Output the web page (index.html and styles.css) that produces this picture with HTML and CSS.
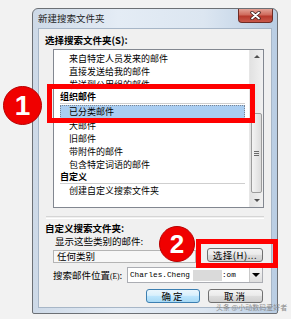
FILE: index.html
```html
<!DOCTYPE html>
<html lang="zh-CN">
<head>
  <meta charset="UTF-8">
  <title>新建搜索文件夹</title>
  <link rel="stylesheet" href="styles.css">
</head>
<body>
  <div class="stage">
    <div class="window">
      <div class="titlebar">
        <span class="title">新建搜索文件夹</span>
        <div class="close">
          <svg width="11" height="9" viewBox="0 0 11 9">
            <path d="M2 1.5 L9 7.5 M9 1.5 L2 7.5" stroke="#3b1d1a" stroke-width="3.4" stroke-linecap="round"/>
            <path d="M2 1.5 L9 7.5 M9 1.5 L2 7.5" stroke="#fff" stroke-width="1.8" stroke-linecap="round"/>
          </svg>
        </div>
      </div>

      <div class="content">
        <div class="label bold">选择搜索文件夹(S):</div>

        <div class="listbox">
          <div class="items">
            <div class="item">来自特定人员发来的邮件</div>
            <div class="item">直接发送给我的邮件</div>
            <div class="item">发送到公用组的邮件</div>
            <div class="group">组织邮件</div>
            <div class="item selected">已分类邮件</div>
            <div class="item">大邮件</div>
            <div class="item">旧邮件</div>
            <div class="item">带附件的邮件</div>
            <div class="item">包含特定词语的邮件</div>
            <div class="group">自定义</div>
            <div class="item">创建自定义搜索文件夹</div>
          </div>
          <div class="scrollbar">
            <div class="sb-btn"><span class="arrow-up"></span></div>
            <div class="sb-track">
              <div class="sb-thumb">
                <svg width="5" height="5" viewBox="0 0 5 5">
                  <path d="M0 0.5h5M0 2.5h5M0 4.5h5" stroke="#6b6b6b" stroke-width="1"/>
                </svg>
              </div>
            </div>
            <div class="sb-btn"><span class="arrow-down"></span></div>
          </div>
        </div>

        <div class="separator"></div>

        <div class="label bold custom-title">自定义搜索文件夹:</div>
        <div class="label sub">显示这些类别的邮件:</div>

        <div class="row">
          <div class="field">任何类别</div>
          <button class="btn pick">选择(H)...</button>
        </div>

        <div class="row location">
          <span class="loc-label">搜索邮件位置<small>(E)</small>:</span>
          <div class="combo">
            <span class="mail">Charles.Cheng</span><span class="blur"></span><span class="mail">:om</span>
            <div class="combo-btn"><span class="arrow-down dark"></span></div>
          </div>
        </div>

        <div class="row actions">
          <button class="btn ok">确定</button>
          <button class="btn cancel">取消</button>
        </div>
      </div>
    </div>

    <div class="mark box-one"></div>
    <div class="badge badge-one">1</div>
    <div class="mark box-two"></div>
    <div class="badge badge-two">2</div>
    <div class="watermark">头条 @小动数码爱好者</div>
  </div>
</body>
</html>
```

FILE: styles.css
```css
body {
  margin: 0;
  background-color: #f2f2f2;
  font-family: "Noto Sans CJK SC", "Liberation Sans", sans-serif;
  font-size: 9px;
  color: #000;
}
.stage {
  position: relative;
  width: 291px;
  height: 319px;
  overflow: hidden;
}
.window {
  margin: 8px 0 0 32px;
  width: 246px;
  height: 306px;
  box-sizing: border-box;
  border: 1px solid #6c7075;
  border-radius: 6px 6px 2px 2px;
  background: linear-gradient(to right, #cdd9e7, #e4ecf5 35%, #dce6f1 70%, #b9cde3);
  padding: 0 5px 5px 5px;
  display: flex;
  flex-direction: column;
}
.titlebar {
  height: 19px;
  display: flex;
  justify-content: space-between;
  align-items: flex-start;
}
.title {
  font-size: 9.5px;
  line-height: 19px;
  color: #1e1e1e;
}
.close {
  width: 35px;
  height: 14px;
  margin-right: -1px;
  box-sizing: border-box;
  border: 1px solid #6e2c25;
  border-top: none;
  border-radius: 0 0 4px 4px;
  background: linear-gradient(#e3a296, #cf6a5c 45%, #b7392c 55%, #c9584a);
  display: flex;
  justify-content: center;
  align-items: center;
}
.content {
  flex: 1;
  background-color: #f0f0f0;
  border: 1px solid #a7b6c7;
  padding: 5px 7px 0 6px;
  display: flex;
  flex-direction: column;
}
.label {
  line-height: 12px;
  font-size: 9.5px;
}
.bold {
  font-weight: bold;
}
.listbox {
  margin: 3px 0 0 8px;
  height: 159px;
  box-sizing: border-box;
  border: 1px solid #828790;
  background-color: #fff;
  display: flex;
  overflow: hidden;
}
.items {
  flex: 1;
  padding-top: 2px;
}
.item {
  height: 13px;
  line-height: 13px;
  padding-left: 15px;
  white-space: nowrap;
}
.group {
  height: 12px;
  line-height: 12px;
  margin: 0 4px 0 6px;
  border-bottom: 1px solid #cfcfcf;
  font-weight: bold;
}
.item.selected {
  height: 12px;
  line-height: 12px;
  margin: 1px 4px 0 6px;
  padding-left: 8px;
  background-color: #a9cdf1;
  border: 1px dotted #7b8593;
}
.scrollbar {
  width: 13px;
  background: linear-gradient(to right, #e2e2e2, #f1f1f1);
  border-left: 1px solid #e6e6e6;
  display: flex;
  flex-direction: column;
}
.sb-btn {
  height: 13px;
  display: flex;
  justify-content: center;
  align-items: center;
}
.sb-track {
  flex: 1;
}
.sb-thumb {
  margin: 50px 1px 0 1px;
  height: 80px;
  box-sizing: border-box;
  border: 1px solid #9c9c9c;
  border-radius: 2px;
  background: linear-gradient(to right, #f4f4f4, #dcdcdc);
  display: flex;
  justify-content: center;
  align-items: center;
}
.arrow-up,
.arrow-down {
  width: 0;
  height: 0;
  border-left: 3px solid transparent;
  border-right: 3px solid transparent;
}
.arrow-up {
  border-bottom: 3px solid #505050;
}
.arrow-down {
  border-top: 3px solid #505050;
}
.arrow-down.dark {
  border-left-width: 4px;
  border-right-width: 4px;
  border-top: 4px solid #000;
}
.separator {
  margin: 8px 0 0 1px;
  height: 1px;
  border-top: 1px solid #d5d5d5;
  border-bottom: 1px solid #fff;
}
.custom-title {
  margin-top: 3px;
}
.sub {
  margin: 1px 0 0 10px;
}
.row {
  display: flex;
  align-items: flex-start;
}
.field {
  margin: 3px 0 0 8px;
  width: 143px;
  height: 13px;
  box-sizing: border-box;
  border: 1px solid #b4b4b4;
  background-color: #f7f7f7;
  padding-left: 3px;
  line-height: 11px;
  font-size: 9.5px;
}
.btn {
  font-family: "Noto Sans CJK SC", "Liberation Sans", sans-serif;
  font-size: 9.5px;
  line-height: 12px;
  padding: 0;
  color: #000;
  box-sizing: border-box;
  border: 1px solid #707070;
  border-radius: 3px;
  background: linear-gradient(#f3f3f3, #ebebeb 45%, #dddddd 50%, #cfcfcf);
}
.pick {
  margin: 1px 1px 0 auto;
  width: 56px;
  height: 14px;
  letter-spacing: 0.5px;
}
.location {
  margin-top: 4px;
  align-items: center;
}
.loc-label {
  margin-left: 8px;
  width: 74px;
  font-size: 9.5px;
  white-space: nowrap;
}
.loc-label small {
  font-family: "Liberation Serif", serif;
  font-size: 7.5px;
}
.combo {
  margin-right: 1px;
  flex: 1;
  height: 16px;
  box-sizing: border-box;
  border: 1px solid #abadb3;
  background-color: #fff;
  display: flex;
  align-items: center;
  padding-left: 2px;
}
.mail {
  font-family: "Liberation Mono", monospace;
  font-size: 7.7px;
}
.blur {
  width: 29px;
  height: 11px;
  margin-left: 3px;
  background-color: #dadada;
}
.combo-btn {
  margin-left: auto;
  width: 13px;
  height: 14px;
  box-sizing: border-box;
  border-left: 1px solid #c9c9c9;
  background: linear-gradient(#f6f6f6, #dedede);
  display: flex;
  justify-content: center;
  align-items: center;
}
.actions {
  margin-top: 6px;
  justify-content: flex-end;
  gap: 8px;
  padding-right: 1px;
}
.ok,
.cancel {
  height: 14px;
  letter-spacing: 2px;
}
.ok {
  width: 54px;
  border-color: #3c7fb1;
  background: linear-gradient(#eaf6fd, #d9f0fc 45%, #bee6fd 50%, #a7d9f5);
}
.cancel {
  width: 55px;
}
.mark {
  position: absolute;
  box-sizing: border-box;
  border: 5px solid #ff0000;
}
.box-one {
  left: 47px;
  top: 84px;
  width: 208px;
  height: 39px;
}
.box-two {
  left: 196px;
  top: 239px;
  width: 82px;
  height: 29px;
}
.badge {
  position: absolute;
  box-sizing: border-box;
  border-radius: 50%;
  background-color: #f00000;
  border: 1px solid #b80000;
  color: #fff;
  font-family: "Liberation Sans", sans-serif;
  font-weight: bold;
  display: flex;
  justify-content: center;
  align-items: center;
}
.badge-one {
  left: 3px;
  top: 86px;
  width: 39px;
  height: 39px;
  font-size: 28px;
}
.badge-two {
  left: 159px;
  top: 226px;
  width: 36px;
  height: 36px;
  font-size: 26px;
}
.watermark {
  position: absolute;
  left: 216px;
  top: 302px;
  font-size: 7px;
  color: #8c8c8c;
  white-space: nowrap;
}
```
